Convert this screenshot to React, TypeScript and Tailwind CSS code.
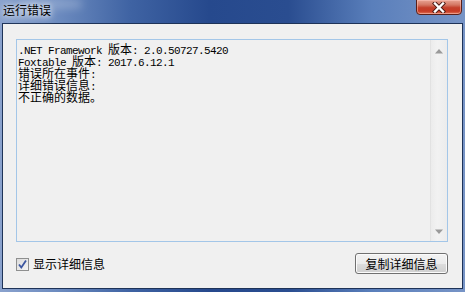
import React from "react";

function Mixed({ text }: { text: string }) {
  const parts = text.split(/([\u0080-\uffff]+)/).filter((p) => p.length > 0);
  return (
    <>
      {parts.map((p, i) =>
        /[\u0080-\uffff]/.test(p) ? (
          <span key={i} className="inline-block h-[12px] overflow-visible font-['Noto_Sans_CJK_SC',sans-serif] text-[12px] leading-[12px] tracking-normal">
            {p}
          </span>
        ) : (
          <span key={i} className="inline-block h-[12px] overflow-visible whitespace-pre font-['Liberation_Mono',monospace] text-[11px] leading-[12px] tracking-[-0.6px]">
            {p}
          </span>
        )
      )}
    </>
  );
}

const lines = [
  ".NET Framework 版本: 2.0.50727.5420",
  "Foxtable 版本: 2017.6.12.1",
  "错误所在事件:",
  "详细错误信息:",
  "不正确的数据。",
];

export default function App() {
  return (
    <div className="w-[465px] h-[292px] overflow-hidden relative flex flex-col px-[2px] pb-[3px] bg-[linear-gradient(to_right,#8aa2cd_0%,#6d8cc0_12%,#3f63a3_28%,#26498d_45%,#2a4d90_62%,#5a7fbb_80%,#7794c6_100%)]">
      {/* title bar */}
      <div className="h-[23px] shrink-0 flex items-center pl-[1px] relative">
        <div className="absolute left-[20px] top-[0px] w-[60px] h-[8px] rounded-full bg-white/25 blur-[4px]" />
        <div className="absolute left-[10px] top-[10px] w-[40px] h-[8px] rounded-full bg-white/20 blur-[4px]" />
        <span className="relative font-['Noto_Sans_CJK_SC',sans-serif] text-[12px] leading-[12px] text-black mt-[-4px] [text-shadow:0_0_5px_rgba(255,255,255,0.9),0_0_8px_rgba(255,255,255,0.7)]">
          运行错误
        </span>
        {/* close button */}
        <div className="absolute right-[1px] top-[-1px] w-[46px] h-[16px] rounded-b-[4px] border border-[#5a2019] bg-[linear-gradient(to_bottom,#e8a493_0%,#d47763_35%,#c4402b_55%,#c73a24_80%,#e0775a_100%)] flex items-center justify-center shadow-[inset_0_0_0_1px_rgba(255,200,190,0.5)]">
          <svg width="14" height="11" viewBox="0 0 14 11">
            <path d="M3 1.5 L11 9.5 M11 1.5 L3 9.5" stroke="#4a1a14" strokeWidth="4.2" strokeLinecap="square" />
            <path d="M3 1.5 L11 9.5 M11 1.5 L3 9.5" stroke="#ffffff" strokeWidth="2.4" strokeLinecap="square" />
          </svg>
        </div>
      </div>
      {/* client */}
      <div className="flex-1 border border-[#1e3358] bg-[#f0f0f0] flex flex-col pt-[15px] pl-[13px] pr-[14px]">
        <div className="w-[432px] h-[203px] border border-[#a3c6e8] bg-[#f0f0f0] flex">
          <div className="flex-1 pt-[2px] pl-[1px] text-black">
            {lines.map((l, i) => (
              <div key={i} className="h-[12px] leading-[12px] whitespace-pre">
                <Mixed text={l} />
              </div>
            ))}
          </div>
          <div className="w-[17px] border-l border-[#e2e2e2] bg-[linear-gradient(to_right,#ececec,#f2f2f2_40%,#ececec)] flex flex-col items-center justify-between pt-[9px] pb-[7px]">
            <svg width="8" height="5" viewBox="0 0 8 5">
              <path d="M4 0 L8 4.5 L0 4.5 Z" fill="#9a9a9a" />
            </svg>
            <svg width="8" height="5" viewBox="0 0 8 5">
              <path d="M0 0.5 L8 0.5 L4 5 Z" fill="#9a9a9a" />
            </svg>
          </div>
        </div>
        <div className="flex items-center justify-between mt-[11px]">
          <div className="flex items-center gap-[4px] ml-[0px] mt-[1px]">
            <div className="w-[13px] h-[13px] border border-[#8e8f8f] bg-[linear-gradient(to_bottom_right,#dcdcdc,#f4f4f4)] flex items-center justify-center">
              <svg width="11" height="11" viewBox="0 0 11 11">
                <path d="M2 5.5 L4.3 8.5 L9 1.5" stroke="#3c56a0" strokeWidth="1.8" fill="none" />
              </svg>
            </div>
            <span className="font-['Noto_Sans_CJK_SC',sans-serif] text-[12px] leading-[14px] text-black">显示详细信息</span>
          </div>
          <button className="w-[93px] h-[21px] mr-[0px] rounded-[3px] border border-[#707070] bg-[linear-gradient(to_bottom,#f3f3f3_0%,#ebebeb_50%,#dddddd_51%,#cfcfcf_100%)] shadow-[inset_0_0_0_1px_#fbfbfb] flex items-center justify-center font-['Noto_Sans_CJK_SC',sans-serif] text-[12px] leading-[14px] text-black">
            复制详细信息
          </button>
        </div>
      </div>
    </div>
  );
}
